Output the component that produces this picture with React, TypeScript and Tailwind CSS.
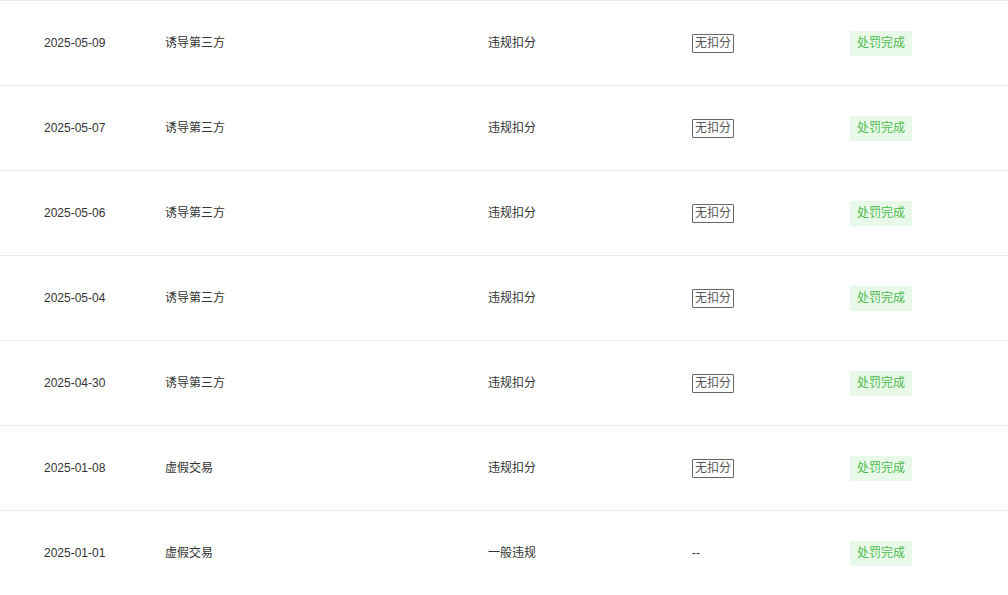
import React from "react";

interface Record {
  date: string;
  reason: string;
  type: string;
  score: string | null;
  status: string;
}

const records: Record[] = [
  { date: "2025-05-09", reason: "诱导第三方", type: "违规扣分", score: "无扣分", status: "处罚完成" },
  { date: "2025-05-07", reason: "诱导第三方", type: "违规扣分", score: "无扣分", status: "处罚完成" },
  { date: "2025-05-06", reason: "诱导第三方", type: "违规扣分", score: "无扣分", status: "处罚完成" },
  { date: "2025-05-04", reason: "诱导第三方", type: "违规扣分", score: "无扣分", status: "处罚完成" },
  { date: "2025-04-30", reason: "诱导第三方", type: "违规扣分", score: "无扣分", status: "处罚完成" },
  { date: "2025-01-08", reason: "虚假交易", type: "违规扣分", score: "无扣分", status: "处罚完成" },
  { date: "2025-01-01", reason: "虚假交易", type: "一般违规", score: null, status: "处罚完成" },
];

export default function App() {
  return (
    <div
      className="w-[1008px] h-[595px] overflow-hidden bg-white text-[12px] text-[#333]"
      style={{ fontFamily: '"Liberation Sans", "Noto Sans CJK SC", sans-serif' }}
    >
      {records.map((r, i) => (
        <div key={i} className="flex items-center h-[85px] border-t border-[#ebebeb] pl-[44px]">
          <div className="w-[121px]">{r.date}</div>
          <div className="w-[323px]">{r.reason}</div>
          <div className="w-[204px]">{r.type}</div>
          <div className="w-[158px]">
            {r.score ? (
              <span className="inline-block border border-[#666] text-[#555] px-[2px] leading-[17px] rounded-[1px]">
                {r.score}
              </span>
            ) : (
              <span className="text-[#333]">--</span>
            )}
          </div>
          <div>
            <span className="inline-block bg-[#e9f9e9] text-[#4cbb4c] px-[7px] leading-[25px]">
              {r.status}
            </span>
          </div>
        </div>
      ))}
    </div>
  );
}
